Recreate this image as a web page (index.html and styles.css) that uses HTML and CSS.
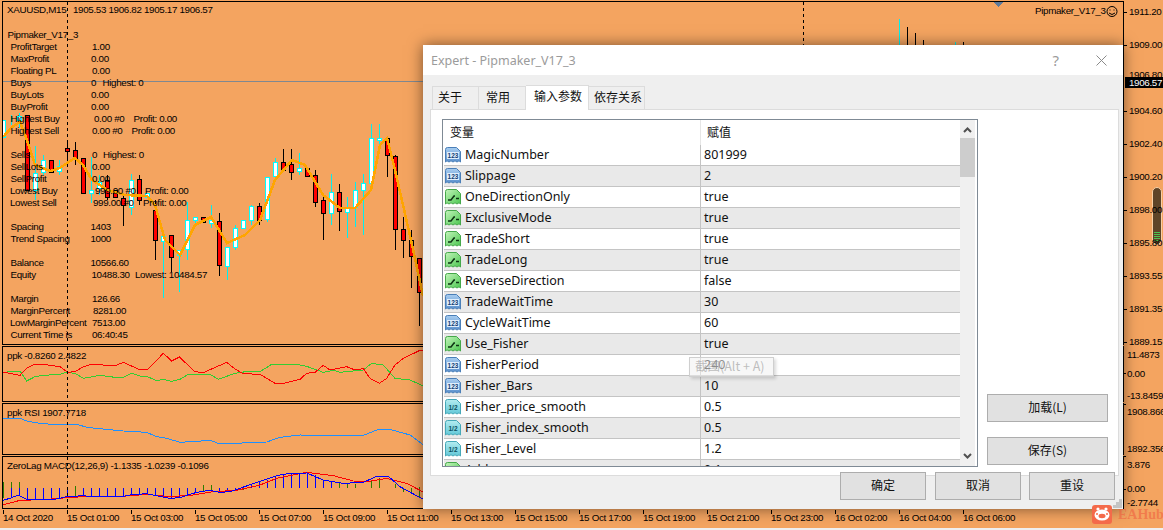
FILE: index.html
```html
<!DOCTYPE html>
<html lang="zh">

<head>
    <meta charset="UTF-8">
    <title>Expert - Pipmaker_V17_3</title>
    <link rel="stylesheet" href="styles.css">
</head>

<body>

    <!-- icons for the input list -->
    <svg class="icon-defs" width="0" height="0">
        <defs>
            <linearGradient id="gradInt" x1="0" y1="0" x2="0" y2="1">
                <stop offset="0" stop-color="#a8cdf0" />
                <stop offset="1" stop-color="#5a90cc" />
            </linearGradient>
            <linearGradient id="gradBool" x1="0" y1="0" x2="1" y2="1">
                <stop offset="0" stop-color="#c4f4bc" />
                <stop offset="1" stop-color="#4cc850" />
            </linearGradient>
            <linearGradient id="gradDbl" x1="0" y1="0" x2="0" y2="1">
                <stop offset="0" stop-color="#b4ecf0" />
                <stop offset="1" stop-color="#62c8d8" />
            </linearGradient>
            <symbol id="iconInt" viewBox="0 0 16 16">
                <path d="M.5 2.5Q.5 .5 2.5 .5H11.5L15.5 4.5V15L14 13.8 12 15 10 13.8 8 15 6 13.8 4 15 2 13.8 .5 15Z" fill="url(#gradInt)" stroke="#4a7fb8" />
                <rect x="2" y="5" width="12" height="7" fill="#dfeefc" />
                <text x="8" y="11" class="icon-num" fill="#123f74">123</text>
            </symbol>
            <symbol id="iconBool" viewBox="0 0 16 16">
                <path d="M.5 2.5Q.5 .5 2.5 .5H11.5L15.5 4.5V15L14 13.8 12 15 10 13.8 8 15 6 13.8 4 15 2 13.8 .5 15Z" fill="url(#gradBool)" stroke="#45a84a" />
                <path d="M3 11H6L9 7H10M11 9.5H14" fill="none" stroke="#0e3414" stroke-width="1.500" />
            </symbol>
            <symbol id="iconDbl" viewBox="0 0 16 16">
                <path d="M.5 2.5Q.5 .5 2.5 .5H11.5L15.5 4.5V15L14 13.8 12 15 10 13.8 8 15 6 13.8 4 15 2 13.8 .5 15Z" fill="url(#gradDbl)" stroke="#45a8b8" />
                <text x="8" y="11" class="icon-num" fill="#0b5060">1/2</text>
            </symbol>
        </defs>
    </svg>

    <div class="terminal">
        <div class="charts">

            <div class="pane pane-main">
                <svg class="chart" width="1120" height="342" viewBox="3 2 1120 342">
                    <path class="wick-black" d="M67.5 140V160M75.5 142V165M107.5 175V200M123.5 195V226M139.5 175V205M155.5 200V260M171.5 235V272M219.5 213V276M259.5 203V225M283.5 149V172M291.5 149V180M315.5 170V207M323.5 195V240M339.5 184V231M387.5 138V177M395.5 155V250M403.5 217V258M411.5 230V288M419.5 258V326M907.5 27V45M915.5 33V45M923.5 40V45M963.5 42V45" />
                    <path class="wick-cyan" d="M11.5 115V125M19.5 113V128M35.5 146V200M43.5 155V175M59.5 160V175M91.5 157V203M99.5 175V195M131.5 174V215M163.5 236V298M179.5 250V292M187.5 202V260M195.5 217V225M211.5 205V228M227.5 247V280M235.5 225V250M251.5 205V225M267.5 177V222M275.5 158V178M299.5 153V175M331.5 174V225M347.5 197V238M355.5 182V227M363.5 174V235M371.5 124V190M379.5 124V154M899.5 19V45M955.5 42V45" />
                    <path class="body-red" d="M25.5 115h4v75h-4zM49.5 160h4v12h-4zM65.5 148h4v3h-4zM73.5 150h4v8h-4zM81.5 158h4v35h-4zM105.5 180h4v17h-4zM113.5 190h4v7h-4zM121.5 198h4v7h-4zM137.5 179h4v21h-4zM153.5 210h4v30h-4zM169.5 235h4v22h-4zM201.5 217h4v5h-4zM217.5 221h4v44h-4zM257.5 206h4v14h-4zM281.5 162h4v8h-4zM289.5 164h4v8h-4zM305.5 168h4v8h-4zM313.5 175h4v27h-4zM321.5 200h4v13h-4zM337.5 192h4v19h-4zM385.5 138h4v17h-4zM393.5 156h4v73h-4zM401.5 229h4v11h-4zM409.5 240h4v16h-4zM417.5 258h4v34h-4z" />
                    <path class="body-white" d="M1.5 120h4v17h-4zM17.5 116h4v4h-4zM33.5 173h4v17h-4zM41.5 160h4v12h-4zM57.5 166h4v5h-4zM89.5 190h4v3h-4zM97.5 182h4v6h-4zM129.5 180h4v27h-4zM145.5 193h4v4h-4zM161.5 236h4v5h-4zM177.5 250h4v5h-4zM185.5 220h4v29h-4zM193.5 217h4v3h-4zM209.5 220h4v3h-4zM225.5 247h4v19h-4zM233.5 228h4v19h-4zM241.5 220h4v8h-4zM249.5 206h4v14h-4zM265.5 177h4v42h-4zM273.5 162h4v14h-4zM297.5 168h4v3h-4zM329.5 192h4v21h-4zM345.5 208h4v4h-4zM353.5 190h4v17h-4zM361.5 183h4v7h-4zM369.5 138h4v45h-4zM377.5 138h4v2h-4z" />
                    <polyline class="ma-line" points="3,137 11,128 20,122 27,140 35,165 50,171 60,168 75,158 83,165 92,180 107,190 125,195 147,196 155,205 165,240 180,255 195,225 211,217 227,243 245,235 260,220 275,180 292,160 305,165 323,195 340,208 355,208 371,190 380,145 387,138 395,170 411,240 423,296" />
                    <path class="bid-line" d="M3 81.5H423" />
                    <path class="dash-line" d="M67.5 2V344M803.5 2V45" />
                    <path class="marker" d="M993 2H1003L998 7Z" />

                    <g transform="translate(0 -1)">
                        <text x="7" y="14">XAUUSD,M15</text>
                        <text x="73" y="14">1905.53 1906.82 1905.17 1906.57</text>
                        <text x="7.5" y="39">Pipmaker_V17_3</text>
                        <text x="10.5" y="51">ProfitTarget</text><text x="92" y="51">1.00</text>
                        <text x="10.5" y="63">MaxProfit</text><text x="91" y="63">0.00</text>
                        <text x="10.5" y="75">Floating PL</text><text x="92" y="75">0.00</text>
                        <text x="10.5" y="87">Buys</text><text x="91" y="87">0</text><text x="102.5" y="87">Highest: 0</text>
                        <text x="10.5" y="99">BuyLots</text><text x="91" y="99">0.00</text>
                        <text x="10.5" y="111">BuyProfit</text><text x="91" y="111">0.00</text>
                        <text x="10.5" y="123">Highest Buy</text><text x="94" y="123">0.00 #0</text><text x="133.5" y="123">Profit: 0.00</text>
                        <text x="10.5" y="135">Highest Sell</text><text x="92" y="135">0.00 #0</text><text x="131.5" y="135">Profit: 0.00</text>
                        <text x="10.5" y="159">Sells</text><text x="92" y="159">0</text><text x="103" y="159">Highest: 0</text>
                        <text x="10.5" y="171">SellLots</text><text x="92" y="171">0.00</text>
                        <text x="10.5" y="183">SellProfit</text><text x="92" y="183">0.00</text>
                        <text x="10" y="195">Lowest Buy</text><text x="95" y="195">999.00 #0</text><text x="145" y="195">Profit: 0.00</text>
                        <text x="10" y="207">Lowest Sell</text><text x="93" y="207">999.00 #0</text><text x="143" y="207">Profit: 0.00</text>
                        <text x="10.5" y="231">Spacing</text><text x="90.5" y="231">1403</text>
                        <text x="10.5" y="243">Trend Spacing</text><text x="90.5" y="243">1000</text>
                        <text x="10.5" y="267">Balance</text><text x="90.5" y="267">10566.60</text>
                        <text x="10.5" y="279">Equity</text><text x="91.5" y="279">10488.30</text><text x="135" y="279">Lowest: 10484.57</text>
                        <text x="10.5" y="303">Margin</text><text x="92" y="303">126.66</text>
                        <text x="10.5" y="315">MarginPercent</text><text x="93" y="315">8281.00</text>
                        <text x="10" y="327">LowMarginPercent</text><text x="92" y="327">7513.00</text>
                        <text x="10.5" y="339">Current Time is</text><text x="92" y="339">06:40:45</text>
                        <text x="1035" y="15">Pipmaker_V17_3</text>
                    </g>
                    <g class="smiley">
                        <circle cx="1112" cy="11.5" r="5" />
                        <path d="M1109 13Q1112 16 1115 13" />
                        <path d="M1110 9.5V10.5M1114 9.5V10.5" />
                    </g>
                </svg>
            </div>

            <div class="pane pane-ppk">
                <span class="pane-label">ppk -0.8260 2.4822</span>
                <svg class="chart" width="420" height="54" viewBox="9 246 1260 162">
                    <polyline class="line-green" points="8,322 60,318 80,348 105,335 130,331 180,328 200,322 225,325 250,340 300,331 345,337 370,337 395,325 420,333 442,335 470,347 490,343 515,349 540,343 565,328 630,328 655,343 705,325 750,318 780,320 815,298 900,300 920,304 970,322 1000,316 1020,322 1090,315 1115,295 1150,300 1185,340 1230,345 1268,362" />
                    <polyline class="line-red" points="8,322 30,325 60,331 80,310 100,299 130,298 180,305 203,322 225,320 250,305 275,298 345,302 370,292 415,312 442,314 490,265 515,288 538,276 585,320 610,323 680,292 705,312 730,326 780,328 825,355 850,355 900,343 920,325 945,322 970,301 990,315 1040,305 1065,315 1090,311 1110,340 1138,355 1160,340 1185,300 1210,280 1260,256 1268,258" />
                    <path class="dash-wide" d="M203 246V408" />
                </svg>
            </div>

            <div class="pane pane-rsi">
                <span class="pane-label">ppk RSI 1907.7718</span>
                <svg class="chart" width="420" height="50" viewBox="9 417 1260 150">
                    <polyline class="line-blue" points="8,460 60,460 80,468 120,475 170,479 235,479 260,487 330,494 370,498 440,502 470,515 500,520 540,532 590,529 630,526 655,535 715,536 740,532 800,531 840,517 900,510 960,511 1090,511 1135,493 1170,493 1230,510 1268,538" />
                    <path class="dash-wide" d="M203 417V567" />
                </svg>
            </div>

            <div class="pane pane-macd">
                <span class="pane-label">ZeroLag MACD(12,26,9) -1.1335 -1.0239 -0.1096</span>
                <svg class="chart" width="420" height="51" viewBox="9 576 1260 153">
                    <path class="hist-green" d="M10 650V700M34 650V690M58 650V690M226 662V692M610 660V680M634 660V676M730 666V674M1018 668V652M1042 668V655M1066 668V656M1114 668V645M1138 668V640M1186 668V658M1210 668V680M1234 668V684M1258 665V700" />
                    <path class="hist-blue" d="M34 668V700M58 668V690M82 668V703M106 668V703M130 668V704M154 668V704M178 668V700M202 668V695M250 668V692M274 668V695M298 668V694M322 668V694M346 668V694M370 668V694M394 668V690M418 668V688M442 668V686M466 668V690M490 668V695M514 668V700M538 668V698M562 668V690M586 668V684M658 668V682M682 668V680M706 668V672M754 668V656M778 668V652M802 668V645M826 668V632M850 668V628M874 668V625M898 668V625M922 668V624M946 668V630M970 668V645M994 668V650" />
                    <polyline class="line-red" points="8,720 60,706 130,704 200,698 250,695 380,693 440,688 510,695 580,690 640,680 710,676 780,660 830,640 920,622 1000,632 1060,648 1100,650 1160,640 1220,655 1268,680" />
                    <polyline class="line-navy" points="8,706 30,700 55,690 80,703 160,704 200,695 250,692 270,695 370,694 390,690 440,686 510,700 540,698 590,682 630,676 660,682 690,680 760,656 830,632 870,625 920,624 970,645 1030,655 1090,652 1130,634 1165,634 1200,665 1268,702" />
                    <path class="dash-wide" d="M203 576V729" />
                </svg>
            </div>

            <div class="time-axis">
                <span>14 Oct 2020</span>
                <span>15 Oct 01:00</span>
                <span>15 Oct 03:00</span>
                <span>15 Oct 05:00</span>
                <span>15 Oct 07:00</span>
                <span>15 Oct 09:00</span>
                <span>15 Oct 11:00</span>
                <span>15 Oct 13:00</span>
                <span>15 Oct 15:00</span>
                <span>15 Oct 17:00</span>
                <span>15 Oct 19:00</span>
                <span>15 Oct 21:00</span>
                <span>15 Oct 23:00</span>
                <span>16 Oct 02:00</span>
                <span>16 Oct 04:00</span>
                <span>16 Oct 06:00</span>
            </div>
        </div>

        <svg class="price-axis" width="39" height="528" viewBox="1124 0 39 528">
            <path class="tick" d="M1124 11.5h3M1124 44.5h3M1124 110.5h3M1124 143.5h3M1124 176.5h3M1124 209.5h3M1124 242.5h3M1124 275.5h3M1124 308.5h3M1124 341.5h3M1124 372.5h2M1124 403.5h2M1124 455.5h2M1124 488.5h2" />
            <rect class="scroll-pill" x="1152.5" y="186.5" width="9" height="57" rx="4.5" />
            <path class="scroll-grip" d="M1154 231.5h6M1154 233.5h6M1154 235.5h6M1154 237.5h6M1154 239.5h6" />
            <g transform="translate(0 -1)">
                <text x="1129" y="15">1911.20</text>
                <text x="1129" y="48">1909.00</text>
                <text x="1129" y="78">1906.80</text>
                <rect class="price-box" x="1125" y="77" width="38" height="11" />
                <text class="price-now" x="1129" y="86">1906.57</text>
                <text x="1129" y="114">1904.60</text>
                <text x="1129" y="147">1902.40</text>
                <text x="1129" y="180">1900.20</text>
                <text x="1129" y="213">1898.00</text>
                <text x="1129" y="246">1895.80</text>
                <text x="1129" y="279">1893.55</text>
                <text x="1129" y="312">1891.35</text>
                <text x="1129" y="345">1889.15</text>
                <text x="1127" y="358">11.4873</text>
                <text x="1127" y="377">0.00</text>
                <text x="1127" y="399">-13.8459</text>
                <text x="1127" y="415">1908.866</text>
                <text x="1127" y="452">1892.356</text>
                <text x="1127" y="468">3.876</text>
                <text x="1127" y="492">0.00</text>
                <text x="1127" y="506">-2.7744</text>
            </g>
        </svg>
    </div>

    <div class="dialog">
        <div class="dialog-title">
            <span class="dialog-name">Expert - Pipmaker_V17_3</span>
            <span class="dialog-help">?</span>
            <svg class="dialog-close" width="11" height="11" viewBox="0 0 11 11">
                <path d="M.5 .5L10.5 10.5M10.5 .5L.5 10.5" />
            </svg>
        </div>

        <div class="dialog-body">
            <div class="tabs">
                <div class="tab">关于</div>
                <div class="tab">常用</div>
                <div class="tab tab-active">输入参数</div>
                <div class="tab tab-last">依存关系</div>
            </div>

            <div class="tab-panel">
                <div class="param-list">
                    <div class="param-table">
                        <div class="param-head">
                            <div class="col-name">变量</div>
                            <div class="col-value">赋值</div>
                        </div>
                        <div class="param-rows">
                            <div class="row"><div class="cell-name"><svg class="type-icon"><use href="#iconInt" /></svg>MagicNumber</div><div class="cell-value">801999</div></div>
                            <div class="row"><div class="cell-name"><svg class="type-icon"><use href="#iconInt" /></svg>Slippage</div><div class="cell-value">2</div></div>
                            <div class="row"><div class="cell-name"><svg class="type-icon"><use href="#iconBool" /></svg>OneDirectionOnly</div><div class="cell-value">true</div></div>
                            <div class="row"><div class="cell-name"><svg class="type-icon"><use href="#iconBool" /></svg>ExclusiveMode</div><div class="cell-value">true</div></div>
                            <div class="row"><div class="cell-name"><svg class="type-icon"><use href="#iconBool" /></svg>TradeShort</div><div class="cell-value">true</div></div>
                            <div class="row"><div class="cell-name"><svg class="type-icon"><use href="#iconBool" /></svg>TradeLong</div><div class="cell-value">true</div></div>
                            <div class="row"><div class="cell-name"><svg class="type-icon"><use href="#iconBool" /></svg>ReverseDirection</div><div class="cell-value">false</div></div>
                            <div class="row"><div class="cell-name"><svg class="type-icon"><use href="#iconInt" /></svg>TradeWaitTime</div><div class="cell-value">30</div></div>
                            <div class="row"><div class="cell-name"><svg class="type-icon"><use href="#iconInt" /></svg>CycleWaitTime</div><div class="cell-value">60</div></div>
                            <div class="row"><div class="cell-name"><svg class="type-icon"><use href="#iconBool" /></svg>Use_Fisher</div><div class="cell-value">true</div></div>
                            <div class="row"><div class="cell-name"><svg class="type-icon"><use href="#iconInt" /></svg>FisherPeriod</div><div class="cell-value">240</div></div>
                            <div class="row"><div class="cell-name"><svg class="type-icon"><use href="#iconInt" /></svg>Fisher_Bars</div><div class="cell-value">10</div></div>
                            <div class="row"><div class="cell-name"><svg class="type-icon"><use href="#iconDbl" /></svg>Fisher_price_smooth</div><div class="cell-value">0.5</div></div>
                            <div class="row"><div class="cell-name"><svg class="type-icon"><use href="#iconDbl" /></svg>Fisher_index_smooth</div><div class="cell-value">0.5</div></div>
                            <div class="row"><div class="cell-name"><svg class="type-icon"><use href="#iconDbl" /></svg>Fisher_Level</div><div class="cell-value">1.2</div></div>
                            <div class="row"><div class="cell-name"><svg class="type-icon"><use href="#iconBool" /></svg>Add</div><div class="cell-value">0.1</div></div>
                        </div>
                    </div>
                    <div class="scrollbar">
                        <svg class="scroll-arrow" width="15" height="17" viewBox="0 0 15 17"><path d="M4 12L7.5 8.500L11 12" /></svg>
                        <div class="scroll-thumb"></div>
                        <svg class="scroll-arrow scroll-arrow-down" width="15" height="17" viewBox="0 0 15 17"><path d="M4 7L7.5 10.500L11 7" /></svg>
                    </div>
                </div>

                <div class="side-buttons">
                    <button class="btn btn-side">加载(L)</button>
                    <button class="btn btn-side">保存(S)</button>
                </div>
            </div>

            <div class="dialog-footer">
                <button class="btn btn-foot btn-first">确定</button>
                <button class="btn btn-foot">取消</button>
                <button class="btn btn-foot">重设</button>
            </div>
        </div>

        <div class="tooltip">截图(Alt + A)</div>

        <svg class="grip" width="9" height="9" viewBox="0 0 9 9">
            <path d="M6 0h3v3h-3zM3 3h3v3h-3zM6 3h3v3h-3zM0 6h3v3h-3zM3 6h3v3h-3zM6 6h3v3h-3z" />
        </svg>
    </div>

    <div class="watermark">
        <svg width="20" height="19" viewBox="0 0 20 19">
            <rect width="20" height="19" rx="3" fill="#f46a4a" />
            <circle cx="6" cy="4" r="1.6" fill="#fff" />
            <circle cx="14" cy="4" r="1.6" fill="#fff" />
            <ellipse cx="10" cy="10" rx="7.500" ry="5.500" fill="#fff" />
            <ellipse cx="10" cy="11" rx="3.500" ry="2.200" fill="#f46a4a" />
            <circle cx="5" cy="9" r="1" fill="#f46a4a" />
            <circle cx="15" cy="9" r="1" fill="#f46a4a" />
        </svg>
        <span class="watermark-text">EAHub</span>
    </div>

</body>

</html>
```

FILE: styles.css
```css
body {
    margin: 0;
    padding: 0;
    background: #f0f0f0;
    overflow: hidden;
    font-family: "Liberation Sans", sans-serif;
}

.icon-defs {
    position: absolute;
}

.icon-num {
    font-family: "Liberation Sans", sans-serif;
    font-size: 6.500px;
    font-weight: bold;
    text-anchor: middle;
}

/* Terminal behind the dialog */
.terminal {
    display: flex;
    height: 527px;
    padding-top: 1px;
    background: #f4a460;
}

.charts {
    display: flex;
    flex-direction: column;
    gap: 1px;
    width: 1122px;
    margin-left: 2px;
}

.pane {
    position: relative;
    flex: none;
    box-sizing: border-box;
    border: 1px solid #000;
    overflow: hidden;
}

.pane-main {
    height: 344px;
}

.pane-ppk {
    height: 56px;
}

.pane-rsi {
    height: 52px;
}

.pane-macd {
    height: 53px;
}

.pane-label {
    position: absolute;
    left: 4px;
    top: 3px;
    font-size: 9.800px;
    letter-spacing: -0.3px;
    line-height: 11px;
    color: #000;
    white-space: nowrap;
}

.chart {
    display: block;
    shape-rendering: crispEdges;
}

.chart text,
.price-axis text {
    font-size: 9.800px;
    letter-spacing: -0.33px;
    fill: #000;
    white-space: pre;
}

.wick-black {
    fill: none;
    stroke: #000;
}

.wick-cyan {
    fill: none;
    stroke: #00f0f0;
}

.body-red {
    fill: #ff0000;
    stroke: #000;
}

.body-white {
    fill: #fff;
    stroke: #00ffff;
}

.ma-line {
    fill: none;
    stroke: #ffa500;
    stroke-width: 2.500;
}

.bid-line {
    stroke: #808890;
}

.dash-line {
    stroke: #000;
    stroke-dasharray: 3 3;
}

.dash-wide {
    stroke: #000;
    stroke-width: 3;
    stroke-dasharray: 9 9;
}

.marker {
    fill: #5f7a99;
}

.smiley {
    fill: none;
    stroke: #000;
    shape-rendering: auto;
}

.line-red,
.line-green,
.line-blue,
.line-navy {
    fill: none;
    stroke-width: 3;
}

.line-red {
    stroke: #ff0000;
}

.line-green {
    stroke: #32cd32;
}

.line-blue {
    stroke: #1e90ff;
}

.line-navy {
    stroke: #0000ff;
}

.hist-green {
    fill: none;
    stroke: #2e7d00;
    stroke-width: 3;
}

.hist-blue {
    fill: none;
    stroke: #0000ff;
    stroke-width: 3;
}

.time-axis {
    display: flex;
    margin-left: 1px;
    font-size: 9.800px;
    letter-spacing: -0.33px;
    line-height: 11px;
    color: #000;
}

.time-axis span {
    flex: none;
    width: 64px;
    white-space: nowrap;
}

.time-axis span::before {
    content: "";
    display: block;
    width: 1px;
    height: 4px;
    margin-bottom: -2px;
    background: #000;
}

.price-axis {
    display: block;
    flex: none;
}

.price-axis .tick {
    stroke: #000;
    fill: none;
}

.price-axis .price-box {
    fill: #000;
}

.price-axis .price-now {
    fill: #fff;
}

.scroll-pill {
    fill: #5f4428;
    stroke: #f9cfa5;
}

.scroll-grip {
    stroke: #4fc24f;
    fill: none;
}

/* Dialog */
.dialog {
    position: absolute;
    left: 423px;
    top: 45px;
    width: 700px;
    height: 464px;
    display: flex;
    flex-direction: column;
    background: #efefef;
    box-shadow: 0 0 14px rgba(0, 0, 0, 0.5);
    font-family: "Noto Sans", "Noto Sans CJK SC", sans-serif;
    font-size: 12.500px;
    color: #111;
}

.dialog-title {
    display: flex;
    align-items: center;
    flex: none;
    height: 30px;
    background: #fff;
}

.dialog-name {
    margin-left: 8px;
    flex: 1;
    font-size: 12.500px;
    color: #9b9b9b;
}

.dialog-help {
    margin-right: 37px;
    font-size: 15px;
    color: #9b9b9b;
}

.dialog-close {
    margin-right: 16px;
}

.dialog-close path {
    fill: none;
    stroke: #8a8a8a;
}

.dialog-body {
    display: flex;
    flex-direction: column;
    flex: 1;
    min-height: 0;
}

.tabs {
    display: flex;
    align-items: flex-end;
    height: 34px;
    margin-left: 9px;
    font-family: "Noto Sans CJK SC", sans-serif;
    font-size: 12px;
}

.tab {
    box-sizing: border-box;
    width: 47px;
    height: 23px;
    padding: 0 0 0 5px;
    border: 1px solid #dcdcdc;
    border-bottom: 0;
    line-height: 20px;
    background: #efefef;
}

.tab + .tab {
    border-left: 0;
}

.tab:nth-child(2) {
    padding-left: 7px;
}

.tab-active {
    position: relative;
    z-index: 1;
    width: 63px;
    height: 25px;
    margin-bottom: -1px;
    padding: 0 0 0 8px;
    border-left: 1px solid #dcdcdc;
    background: #fff;
}

.tab-last {
    width: 56px;
    padding-left: 5px;
}

.tab-panel {
    display: flex;
    align-items: stretch;
    gap: 9px;
    box-sizing: border-box;
    flex: none;
    height: 367px;
    margin: 0 4px 0 7px;
    padding: 9px 10px 8px 11px;
    border: 1px solid #dcdcdc;
    background: #fff;
}

.param-list {
    display: flex;
    box-sizing: border-box;
    flex: none;
    width: 536px;
    padding: 0 2px 0 1px;
    border: 1px solid #7f8a95;
    overflow: hidden;
}

.param-table {
    flex: 1;
    min-width: 0;
    overflow: hidden;
}

.param-head {
    display: grid;
    grid-template-columns: 257px 1fr;
    height: 25px;
    line-height: 23px;
    font-family: "Noto Sans CJK SC", sans-serif;
    font-size: 12px;
}

.col-name {
    padding-left: 6px;
    border-right: 1px solid #e6e6e6;
}

.col-value {
    padding-left: 6px;
}

.row {
    display: grid;
    grid-template-columns: 257px 1fr;
    box-sizing: border-box;
    height: 21px;
    border-bottom: 1px solid #c4c4c4;
    line-height: 20px;
    background: #fff;
}

.row:nth-child(even) {
    background: #e9e9e9;
}

.cell-name {
    display: flex;
    align-items: center;
    white-space: nowrap;
    border-right: 1px solid #c4c4c4;
}

.cell-value {
    padding-left: 3px;
}

.type-icon {
    flex: none;
    width: 16px;
    height: 16px;
    margin: 0 4px 0 1px;
}

.scrollbar {
    display: flex;
    flex-direction: column;
    flex: none;
    width: 15px;
    background: #f0f0f0;
}

.scroll-arrow {
    display: block;
    flex: none;
}

.scroll-arrow path {
    fill: none;
    stroke: #505050;
    stroke-width: 2;
}

.scroll-arrow-down {
    margin-top: auto;
    margin-bottom: 2px;
}

.scroll-thumb {
    flex: none;
    height: 39px;
    margin-top: 1px;
    background: #cdcdcd;
}

.side-buttons {
    display: flex;
    flex-direction: column;
    justify-content: flex-end;
    gap: 15px;
    padding-bottom: 2px;
}

.btn {
    box-sizing: border-box;
    border: 1px solid #adadad;
    background: #e1e1e1;
    font-family: "Noto Sans CJK SC", sans-serif;
    font-size: 12px;
    color: #111;
    padding: 0 0 4px;
}

.btn-side {
    width: 121px;
    height: 28px;
}

.dialog-footer {
    position: relative;
    display: flex;
    justify-content: flex-end;
    gap: 8px;
    margin-top: -4px;
    padding-right: 8px;
}

.btn-foot {
    width: 86px;
    height: 28px;
}

.btn-first {
    margin-right: 1px;
}

.tooltip {
    position: absolute;
    left: 266px;
    top: 312px;
    box-sizing: border-box;
    width: 85px;
    height: 20px;
    padding-left: 5px;
    border: 1px solid #cfcfcf;
    background: rgba(240, 240, 240, 0.55);
    box-shadow: 2px 2px 3px rgba(0, 0, 0, 0.15);
    font-family: "Noto Sans CJK SC", sans-serif;
    font-size: 12.500px;
    line-height: 16px;
    color: rgba(150, 150, 150, 0.6);
    white-space: nowrap;
}

.grip {
    position: absolute;
    right: 1px;
    bottom: 1px;
}

.grip path {
    fill: #c4c4c4;
}

.watermark {
    position: absolute;
    left: 1092px;
    top: 505px;
    display: flex;
    align-items: center;
    gap: 6px;
}

.watermark svg {
    display: block;
}

.watermark-text {
    font-family: "Liberation Serif", serif;
    font-size: 14px;
    font-weight: bold;
    color: rgba(240, 90, 60, 0.55);
}
```
